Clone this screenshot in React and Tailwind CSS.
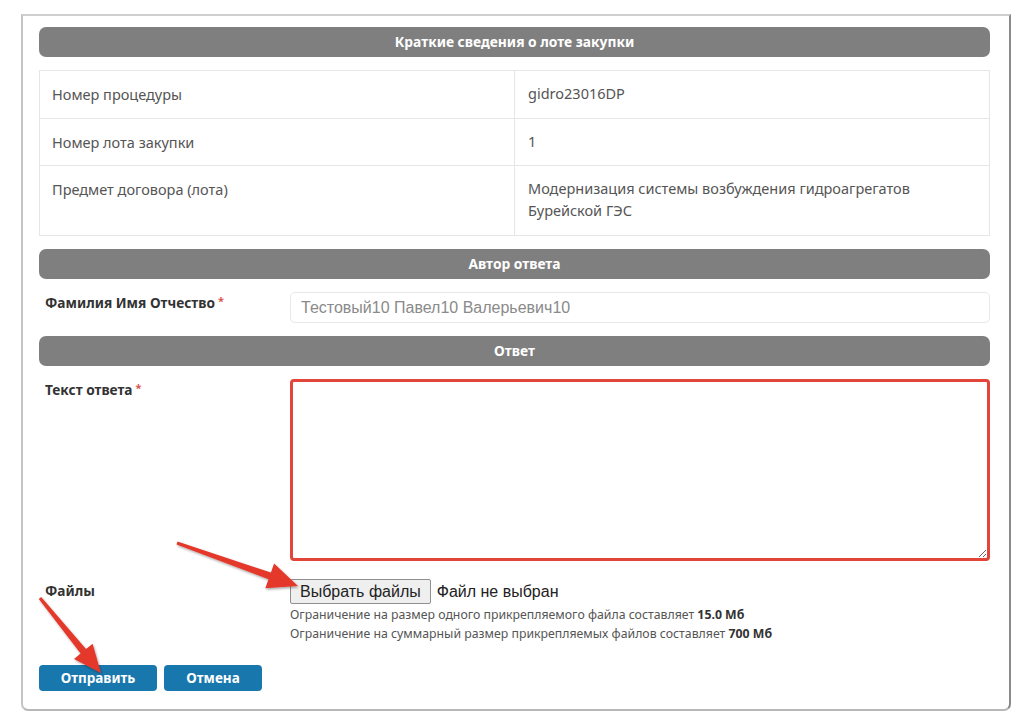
import React from "react";

const SectionBar = ({ children }) => (
  <div className="h-[30px] rounded-[7px] bg-[#7f7f7f] flex items-center justify-center text-white font-bold text-[13.8px]">
    {children}
  </div>
);

const Req = () => <span className="text-[#d9534f] text-[11px] align-top ml-[3px]">*</span>;

const rows = [
  { k: "Номер процедуры", v: "gidro23016DP", h: "h-[47px]" },
  { k: "Номер лота закупки", v: "1", h: "h-[47px]" },
  { k: "Предмет договора (лота)", v: "Модернизация системы возбуждения гидроагрегатов Бурейской ГЭС", h: "h-[70px]" },
];

function Arrows() {
  return (
    <svg
      className="absolute left-0 top-0 pointer-events-none"
      width="1024"
      height="725"
      viewBox="0 0 1024 725"
    >
      <defs>
        <filter id="arrowShadow" x="-20%" y="-20%" width="140%" height="140%">
          <feDropShadow dx="1" dy="1.5" stdDeviation="1.2" floodColor="#000" floodOpacity="0.35" />
        </filter>
      </defs>
      <g fill="#e3392c" filter="url(#arrowShadow)">
        <polygon points="176.5,544.4 268.5,579.2 265.3,588.2 298,586 274.1,563.6 270.9,572.6 177.5,541.6" />
        <polygon points="38.8,598.9 80.6,653.5 74.0,658.9 101,673 92.6,643.7 86.0,649.1 41.2,597.1" />
      </g>
    </svg>
  );
}

export default function App() {
  return (
    <div className="relative w-[1024px] h-[725px] bg-white overflow-hidden font-['Noto_Sans',sans-serif]">
      <div className="pt-[14px] pl-[21px]">
        <div className="w-[990px] h-[697px] border-t-2 border-l-2 border-b-2 border-r-2 border-t-[#cfcfcf] border-l-[#c4c4c4] border-b-[#b8b8b8] border-r-[#8a8a8a] rounded-b-[7px] pt-[11px] pl-[16px] pr-[19px]">
          <SectionBar>Краткие сведения о лоте закупки</SectionBar>

          <div className="mt-[13px] border border-[#e6e6e6] text-[14.5px] text-[#555]">
            {rows.map((r, i) => (
              <div key={i} className={`flex ${r.h} ${i > 0 ? "border-t border-[#e6e6e6]" : ""}`}>
                <div className="w-[475px] border-r border-[#e6e6e6] pl-[12px] pt-[13px]">{r.k}</div>
                <div className="flex-1 pl-[13px] pr-[60px] pt-[11px] leading-[22px]">{r.v}</div>
              </div>
            ))}
          </div>

          <div className="mt-[13px]">
            <SectionBar>Автор ответа</SectionBar>
          </div>

          <div className="flex mt-[13px]">
            <div className="w-[251px] pl-[6px] pt-[1px] text-[13.7px] font-bold text-[#333]">
              Фамилия Имя Отчество<Req />
            </div>
            <div className="flex-1 h-[31px] rounded-[5px] border border-[#e8e8e8] flex items-center pl-[10px] text-[16px] text-[#8a8a8a] font-['Liberation_Sans',Arial,sans-serif]">
              Тестовый10 Павел10 Валерьевич10
            </div>
          </div>

          <div className="mt-[13px]">
            <SectionBar>Ответ</SectionBar>
          </div>

          <div className="flex mt-[13px]">
            <div className="w-[251px] pl-[6px] pt-[1px] text-[13.7px] font-bold text-[#333]">
              Текст ответа<Req />
            </div>
            <textarea className="flex-1 h-[182px] rounded-[4px] border-[3px] border-[#e2463b] outline-none resize-y" />
          </div>

          <div className="flex mt-[18px]">
            <div className="w-[251px] pl-[6px] pt-[2px] text-[13.7px] font-bold text-[#333]">Файлы</div>
            <div className="flex-1">
              <div className="flex items-center font-['Liberation_Sans',Arial,sans-serif] text-[16px] text-[#222]">
                <span className="h-[25px] px-[9px] flex items-center bg-[#efefef] border border-[#8f8f8f] rounded-[2px]">
                  Выбрать файлы
                </span>
                <span className="ml-[6px]">Файл не выбран</span>
              </div>
              <div className="mt-[1px] text-[12.3px] leading-[19px] text-[#555]">
                <div>
                  Ограничение на размер одного прикрепляемого файла составляет <b className="text-[#333]">15.0 Мб</b>
                </div>
                <div>
                  Ограничение на суммарный размер прикрепляемых файлов составляет <b className="text-[#333]">700 Мб</b>
                </div>
              </div>
            </div>
          </div>

          <div className="flex gap-[7px] mt-[22px]">
            <button className="w-[118px] h-[26px] rounded-[4px] bg-[#1878ad] text-white text-[13.5px] font-bold">
              Отправить
            </button>
            <button className="w-[98px] h-[26px] rounded-[4px] bg-[#1878ad] text-white text-[13.5px] font-bold">
              Отмена
            </button>
          </div>
        </div>
      </div>
      <Arrows />
    </div>
  );
}
